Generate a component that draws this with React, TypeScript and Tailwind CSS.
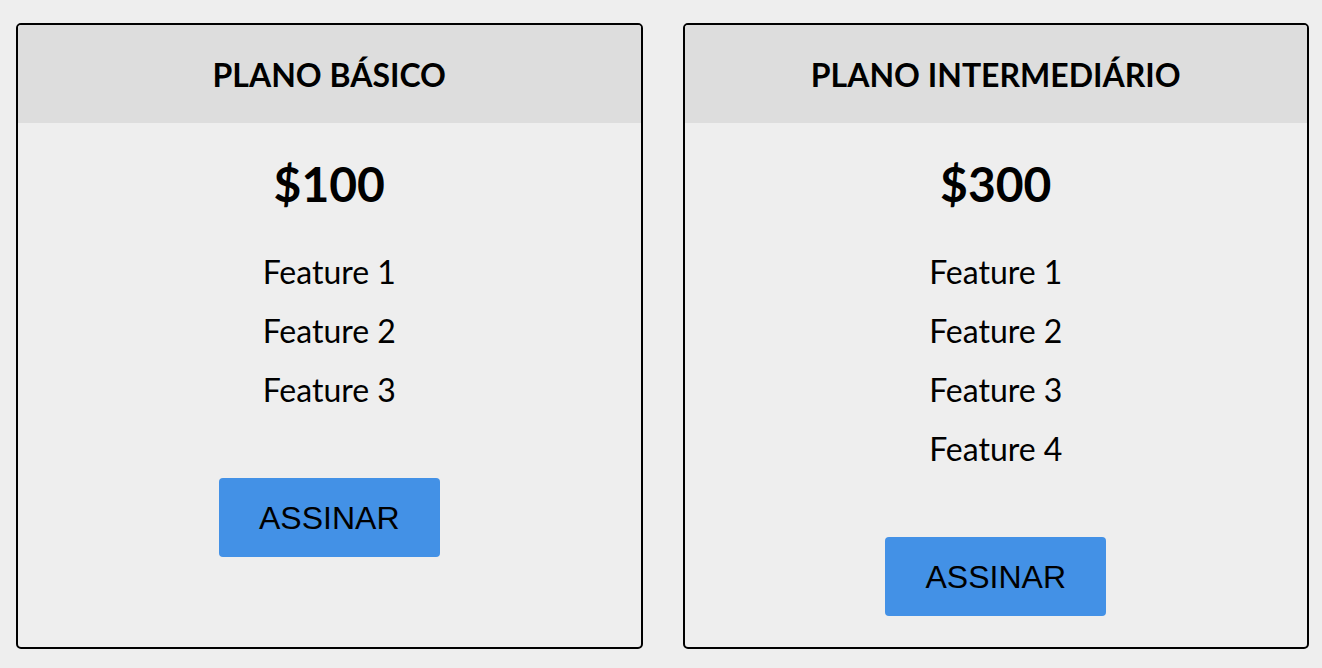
import React from 'react';

type Plan = {
  name: string;
  price: string;
  features: string[];
};

const plans: Plan[] = [
  { name: "PLANO BÁSICO", price: "$100", features: ["Feature 1", "Feature 2", "Feature 3"] },
  { name: "PLANO INTERMEDIÁRIO", price: "$300", features: ["Feature 1", "Feature 2", "Feature 3", "Feature 4"] },
];

const PlanCard = ({ plan }: { plan: Plan }) => {
  return (
    <div className="flex flex-col border-2 border-black rounded-[5px] overflow-hidden bg-[#eeeeee]">
      <div className="h-[98px] bg-[#dddddd] flex items-center justify-center pt-[2px]">
        <h2 className="text-[32px] font-bold text-black leading-none">{plan.name}</h2>
      </div>
      <div className="flex flex-col items-center pt-8 pb-[31px]">
        <div className="text-[48px] font-bold leading-[58px] text-black">{plan.price}</div>
        <ul className="mt-[29px] flex flex-col items-center">
          {plan.features.map((f) => (
            <li key={f} className="text-[32px] leading-[59px] text-black">
              {f}
            </li>
          ))}
        </ul>
        <button
          className="mt-[59px] w-[221px] h-[79px] bg-[#4391e6] rounded-[4px] text-[32px] text-black"
          style={{ fontFamily: '"Liberation Sans", Arial, sans-serif' }}
        >
          ASSINAR
        </button>
      </div>
    </div>
  );
};

export default function App() {
  return (
    <div
      className="min-h-screen bg-[#eeeeee] pt-[23px] pl-4 pr-[13px] pb-[19px]"
      style={{ fontFamily: 'Lato, "Open Sans", sans-serif' }}
    >
      <div className="grid grid-cols-2 gap-10 items-stretch">
        {plans.map((p) => (
          <PlanCard key={p.name} plan={p} />
        ))}
      </div>
    </div>
  );
}
